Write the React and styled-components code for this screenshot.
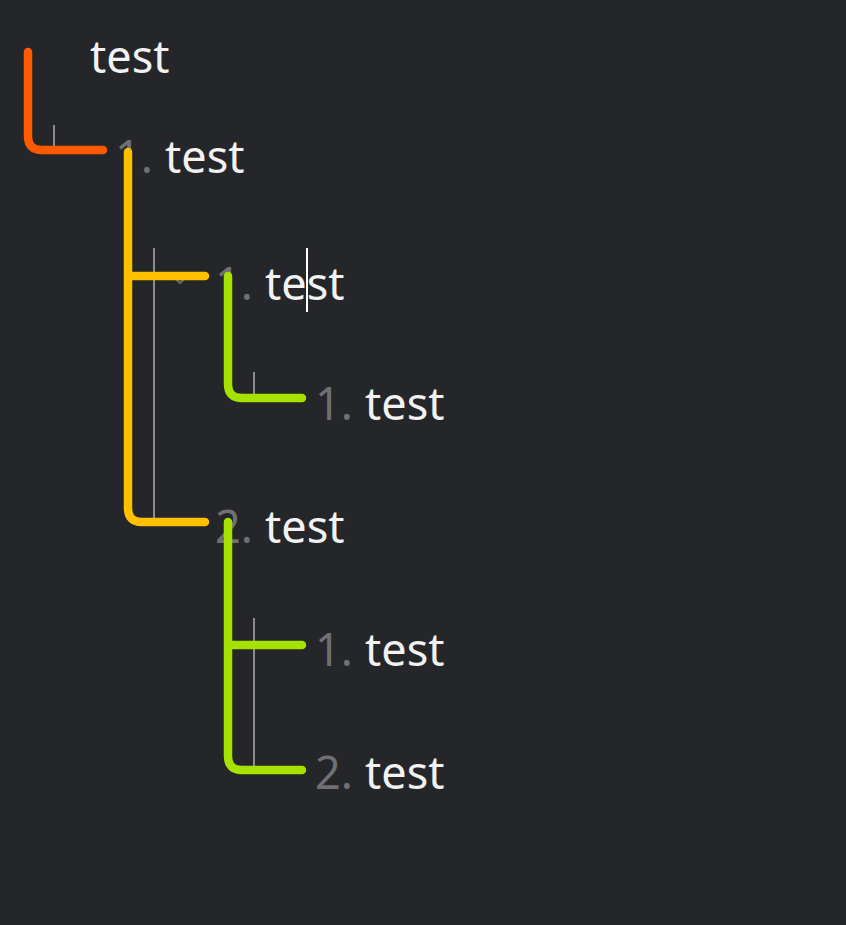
import styled, { createGlobalStyle } from "styled-components";

const GlobalStyle = createGlobalStyle`
    html, body {
        margin: 0;
        padding: 0;
        background-color: #25262a;
    }
`;

const Page = styled.div`
    min-height: 100vh;
    background-color: #25262a;
    font-family: "Noto Sans", "Open Sans", sans-serif;
    font-size: 45px;
    color: #f2f2f2;
`;

const Editor = styled.div`
    position: relative;
    padding-top: 25px;
`;

const Paragraph = styled.div`
    line-height: 61px;
    height: 61px;
    padding-left: 90px;
`;

const Row = styled.div`
    display: flex;
    align-items: baseline;
    line-height: 61.25px;
    height: 61.25px;
    margin-top: ${({ $first }) => ($first ? "39px" : "62px")};
    padding-left: ${({ $depth }) => 115 + ($depth - 1) * 100}px;
`;

const Marker = styled.span`
    width: 50px;
    flex-shrink: 0;
    color: #707074;
`;

const Text = styled.span`
    white-space: pre;
`;

const Caret = styled.span`
    display: inline-block;
    width: 2px;
    height: 64px;
    margin: 0 -1px;
    background-color: #ffffff;
    vertical-align: -12px;
`;

const Lines = styled.svg`
    position: absolute;
    top: 0;
    left: 0;
    width: 100%;
    height: 100%;
    pointer-events: none;
    overflow: visible;
`;

const items = [
    { depth: 1, marker: "1." },
    { depth: 2, marker: "1.", caret: true },
    { depth: 3, marker: "1." },
    { depth: 2, marker: "2." },
    { depth: 3, marker: "1." },
    { depth: 3, marker: "2." },
];

const guides = [
    { x: 54, y1: 125, y2: 150 },
    { x: 154, y1: 248, y2: 522 },
    { x: 254, y1: 372, y2: 398 },
    { x: 254, y1: 618, y2: 770 },
];

// elbow from a parent down to its last child, with a rounded corner
const elbow = (x, y1, y2, x2) => `M${x} ${y1} V${y2 - 14} Q${x} ${y2} ${x + 14} ${y2} H${x2}`;

const branches = [
    { color: "#ff5a00", d: elbow(28, 52, 150, 103) },
    { color: "#ffc000", d: elbow(128, 152, 522, 205) + " M128 276 H205" },
    { color: "#a5e200", d: elbow(228, 276, 398, 302) },
    { color: "#a5e200", d: elbow(228, 522, 770, 302) + " M228 645 H302" },
];

const ItemText = ({ caret }) =>
    caret ? (
        <Text>
            te<Caret />st
        </Text>
    ) : (
        <Text>test</Text>
    );

const App = () => {
    return (
        <Page>
            <GlobalStyle />
            <Editor>
                <Paragraph>test</Paragraph>
                {items.map((item, i) => (
                    <Row key={i} $depth={item.depth} $first={i === 0}>
                        <Marker>{item.marker}</Marker>
                        <ItemText caret={item.caret} />
                    </Row>
                ))}
                <Lines>
                    {guides.map((g, i) => (
                        <line key={i} x1={g.x} y1={g.y1} x2={g.x} y2={g.y2} stroke="#8c8c8e" strokeWidth="2" />
                    ))}
                    <path d="M175 278 L180 283 L185 278" fill="none" stroke="#6a6a6e" strokeWidth="2" strokeLinecap="round" />
                    {branches.map((b, i) => (
                        <path
                            key={i}
                            d={b.d}
                            fill="none"
                            stroke={b.color}
                            strokeWidth="8.5"
                            strokeLinecap="round"
                            strokeLinejoin="round"
                        />
                    ))}
                </Lines>
            </Editor>
        </Page>
    );
};

export default App;
